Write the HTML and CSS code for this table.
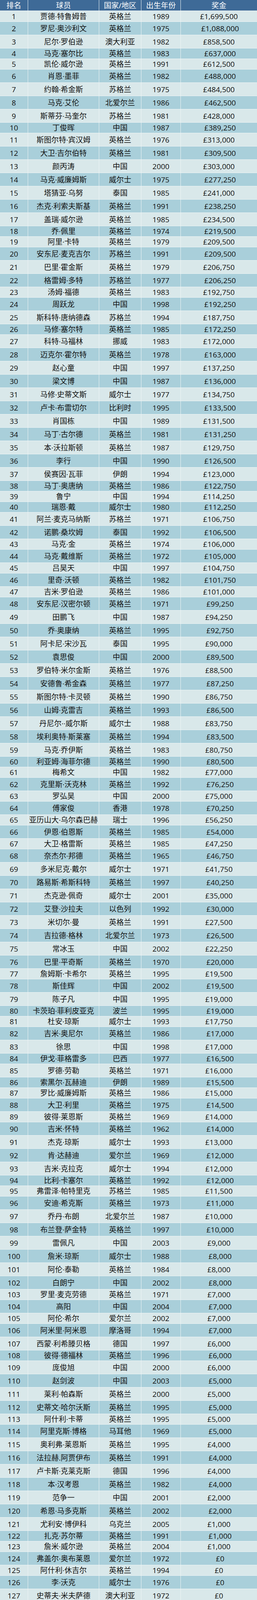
FILE: index.html
```html
<!DOCTYPE html>
<html lang="zh">
<head>
<meta charset="utf-8">
<title>奖金排名</title>
<link rel="stylesheet" href="styles.css">
</head>
<body>
<div class="sheet">
<div class="row head base"><span>排名</span><span>球员</span><span>国家/地区</span><span>出生年份</span><span>奖金</span></div>
<div class="row odd base"><span>1</span><span>贾德·特鲁姆普</span><span>英格兰</span><span>1989</span><span class="prize">£1,699,500</span></div>
<div class="row even tall"><span>2</span><span>罗尼·奥沙利文</span><span>英格兰</span><span>1975</span><span class="prize">£1,088,000</span></div>
<div class="row odd tall"><span>3</span><span>尼尔·罗伯逊</span><span>澳大利亚</span><span>1982</span><span class="prize">£858,500</span></div>
<div class="row even short"><span>4</span><span>马克·塞尔比</span><span>英格兰</span><span>1983</span><span class="prize">£637,000</span></div>
<div class="row odd short"><span>5</span><span>凯伦·威尔逊</span><span>英格兰</span><span>1991</span><span class="prize">£612,500</span></div>
<div class="row even tall"><span>6</span><span>肖恩·墨菲</span><span>英格兰</span><span>1982</span><span class="prize">£488,000</span></div>
<div class="row odd tall"><span>7</span><span>约翰·希金斯</span><span>苏格兰</span><span>1975</span><span class="prize">£484,500</span></div>
<div class="row even tall"><span>8</span><span>马克·艾伦</span><span>北爱尔兰</span><span>1986</span><span class="prize">£462,500</span></div>
<div class="row odd tall"><span>9</span><span>斯蒂芬·马奎尔</span><span>苏格兰</span><span>1981</span><span class="prize">£428,000</span></div>
<div class="row even short"><span>10</span><span>丁俊晖</span><span>中国</span><span>1987</span><span class="prize">£389,250</span></div>
<div class="row odd tall"><span>11</span><span>斯图尔特·宾汉姆</span><span>英格兰</span><span>1976</span><span class="prize">£313,000</span></div>
<div class="row even tall"><span>12</span><span>大卫·吉尔伯特</span><span>英格兰</span><span>1981</span><span class="prize">£309,500</span></div>
<div class="row odd tall"><span>13</span><span>颜丙涛</span><span>中国</span><span>2000</span><span class="prize">£303,000</span></div>
<div class="row even tall"><span>14</span><span>马克·威廉姆斯</span><span>威尔士</span><span>1975</span><span class="prize">£277,250</span></div>
<div class="row odd tall"><span>15</span><span>塔猜亚·乌努</span><span>泰国</span><span>1985</span><span class="prize">£241,000</span></div>
<div class="row even tall"><span>16</span><span>杰克·利索夫斯基</span><span>英格兰</span><span>1991</span><span class="prize">£238,250</span></div>
<div class="row odd tall"><span>17</span><span>盖瑞·威尔逊</span><span>英格兰</span><span>1985</span><span class="prize">£234,500</span></div>
<div class="row even short"><span>18</span><span>乔·佩里</span><span>英格兰</span><span>1974</span><span class="prize">£219,500</span></div>
<div class="row odd short"><span>19</span><span>阿里·卡特</span><span>英格兰</span><span>1979</span><span class="prize">£209,500</span></div>
<div class="row even tall"><span>20</span><span>安东尼·麦克吉尔</span><span>苏格兰</span><span>1991</span><span class="prize">£209,500</span></div>
<div class="row odd tall"><span>21</span><span>巴里·霍金斯</span><span>英格兰</span><span>1979</span><span class="prize">£206,750</span></div>
<div class="row even tall"><span>22</span><span>格雷姆·多特</span><span>苏格兰</span><span>1977</span><span class="prize">£206,250</span></div>
<div class="row odd short"><span>23</span><span>汤姆·福德</span><span>英格兰</span><span>1983</span><span class="prize">£192,750</span></div>
<div class="row even tall"><span>24</span><span>周跃龙</span><span>中国</span><span>1998</span><span class="prize">£192,250</span></div>
<div class="row odd tall"><span>25</span><span>斯科特·唐纳德森</span><span>苏格兰</span><span>1994</span><span class="prize">£187,750</span></div>
<div class="row even short"><span>26</span><span>马修·塞尔特</span><span>英格兰</span><span>1985</span><span class="prize">£172,250</span></div>
<div class="row odd tall"><span>27</span><span>科特·马福林</span><span>挪威</span><span>1983</span><span class="prize">£172,000</span></div>
<div class="row even tall"><span>28</span><span>迈克尔·霍尔特</span><span>英格兰</span><span>1978</span><span class="prize">£163,000</span></div>
<div class="row odd tall"><span>29</span><span>赵心童</span><span>中国</span><span>1997</span><span class="prize">£137,250</span></div>
<div class="row even tall"><span>30</span><span>梁文博</span><span>中国</span><span>1987</span><span class="prize">£136,000</span></div>
<div class="row odd tall"><span>31</span><span>马修·史蒂文斯</span><span>威尔士</span><span>1977</span><span class="prize">£134,750</span></div>
<div class="row even tall"><span>32</span><span>卢卡·布雷切尔</span><span>比利时</span><span>1995</span><span class="prize">£133,500</span></div>
<div class="row odd tall"><span>33</span><span>肖国栋</span><span>中国</span><span>1989</span><span class="prize">£131,500</span></div>
<div class="row even tall"><span>34</span><span>马丁·古尔德</span><span>英格兰</span><span>1981</span><span class="prize">£131,250</span></div>
<div class="row odd tall"><span>35</span><span>本·沃拉斯顿</span><span>英格兰</span><span>1987</span><span class="prize">£129,750</span></div>
<div class="row even tall"><span>36</span><span>李行</span><span>中国</span><span>1990</span><span class="prize">£126,500</span></div>
<div class="row odd tall"><span>37</span><span>侯赛因·瓦菲</span><span>伊朗</span><span>1994</span><span class="prize">£123,000</span></div>
<div class="row even short"><span>38</span><span>马丁·奥唐纳</span><span>英格兰</span><span>1986</span><span class="prize">£122,750</span></div>
<div class="row odd short"><span>39</span><span>鲁宁</span><span>中国</span><span>1994</span><span class="prize">£114,250</span></div>
<div class="row even short"><span>40</span><span>瑞恩·戴</span><span>威尔士</span><span>1980</span><span class="prize">£112,250</span></div>
<div class="row odd tall"><span>41</span><span>阿兰·麦克马纳斯</span><span>苏格兰</span><span>1971</span><span class="prize">£106,750</span></div>
<div class="row even tall"><span>42</span><span>诺鹏·桑坎姆</span><span>泰国</span><span>1992</span><span class="prize">£106,500</span></div>
<div class="row odd short"><span>43</span><span>马克·金</span><span>英格兰</span><span>1974</span><span class="prize">£106,000</span></div>
<div class="row even tall"><span>44</span><span>马克·戴维斯</span><span>英格兰</span><span>1972</span><span class="prize">£105,000</span></div>
<div class="row odd short"><span>45</span><span>吕昊天</span><span>中国</span><span>1997</span><span class="prize">£104,750</span></div>
<div class="row even tall"><span>46</span><span>里奇·沃顿</span><span>英格兰</span><span>1982</span><span class="prize">£101,750</span></div>
<div class="row odd short"><span>47</span><span>吉米·罗伯逊</span><span>英格兰</span><span>1986</span><span class="prize">£101,000</span></div>
<div class="row even tall"><span>48</span><span>安东尼·汉密尔顿</span><span>英格兰</span><span>1971</span><span class="prize">£99,250</span></div>
<div class="row odd tall"><span>49</span><span>田鹏飞</span><span>中国</span><span>1987</span><span class="prize">£94,250</span></div>
<div class="row even tall"><span>50</span><span>乔·奥康纳</span><span>英格兰</span><span>1995</span><span class="prize">£92,750</span></div>
<div class="row odd tall"><span>51</span><span>阿卡尼·宋沙瓦</span><span>泰国</span><span>1995</span><span class="prize">£90,000</span></div>
<div class="row even tall"><span>52</span><span>袁思俊</span><span>中国</span><span>2000</span><span class="prize">£89,500</span></div>
<div class="row odd tall"><span>53</span><span>罗伯特·米尔金斯</span><span>英格兰</span><span>1976</span><span class="prize">£88,500</span></div>
<div class="row even tall"><span>54</span><span>安德鲁·希金森</span><span>英格兰</span><span>1977</span><span class="prize">£87,250</span></div>
<div class="row odd tall"><span>55</span><span>斯图尔特·卡灵顿</span><span>英格兰</span><span>1990</span><span class="prize">£86,750</span></div>
<div class="row even tall"><span>56</span><span>山姆·克雷吉</span><span>英格兰</span><span>1993</span><span class="prize">£86,500</span></div>
<div class="row odd tall"><span>57</span><span>丹尼尔··威尔斯</span><span>威尔士</span><span>1988</span><span class="prize">£83,750</span></div>
<div class="row even tall"><span>58</span><span>埃利奥特·斯莱塞</span><span>英格兰</span><span>1994</span><span class="prize">£83,500</span></div>
<div class="row odd tall"><span>59</span><span>马克·乔伊斯</span><span>英格兰</span><span>1983</span><span class="prize">£80,750</span></div>
<div class="row even short"><span>60</span><span>利亚姆·海菲尔德</span><span>英格兰</span><span>1990</span><span class="prize">£80,500</span></div>
<div class="row odd short"><span>61</span><span>梅希文</span><span>中国</span><span>1982</span><span class="prize">£77,000</span></div>
<div class="row even tall"><span>62</span><span>克里斯·沃克林</span><span>英格兰</span><span>1992</span><span class="prize">£76,250</span></div>
<div class="row odd short"><span>63</span><span>罗弘昊</span><span>中国</span><span>2000</span><span class="prize">£75,000</span></div>
<div class="row even tall"><span>64</span><span>傅家俊</span><span>香港</span><span>1978</span><span class="prize">£70,250</span></div>
<div class="row odd short"><span>65</span><span>亚历山大·乌尔森巴赫</span><span>瑞士</span><span>1996</span><span class="prize">£56,250</span></div>
<div class="row even tall"><span>66</span><span>伊恩·伯恩斯</span><span>英格兰</span><span>1985</span><span class="prize">£54,000</span></div>
<div class="row odd short"><span>67</span><span>大卫·格雷斯</span><span>英格兰</span><span>1985</span><span class="prize">£47,250</span></div>
<div class="row even tall"><span>68</span><span>奈杰尔·邦德</span><span>英格兰</span><span>1965</span><span class="prize">£46,750</span></div>
<div class="row odd tall"><span>69</span><span>多米尼克·戴尔</span><span>威尔士</span><span>1971</span><span class="prize">£41,750</span></div>
<div class="row even tall"><span>70</span><span>路易斯·希斯科特</span><span>英格兰</span><span>1997</span><span class="prize">£40,250</span></div>
<div class="row odd tall"><span>71</span><span>杰克逊·佩奇</span><span>威尔士</span><span>2001</span><span class="prize">£35,000</span></div>
<div class="row even tall"><span>72</span><span>艾登·沙拉夫</span><span>以色列</span><span>1992</span><span class="prize">£30,000</span></div>
<div class="row odd tall"><span>73</span><span>米切尔·曼</span><span>英格兰</span><span>1991</span><span class="prize">£27,500</span></div>
<div class="row even tall"><span>74</span><span>吉拉德·格林</span><span>北爱尔兰</span><span>1973</span><span class="prize">£26,500</span></div>
<div class="row odd tall"><span>75</span><span>常冰玉</span><span>中国</span><span>2002</span><span class="prize">£22,250</span></div>
<div class="row even tall"><span>76</span><span>巴里·平奇斯</span><span>英格兰</span><span>1970</span><span class="prize">£20,000</span></div>
<div class="row odd short"><span>77</span><span>詹姆斯·卡希尔</span><span>英格兰</span><span>1995</span><span class="prize">£19,500</span></div>
<div class="row even tall"><span>78</span><span>斯佳辉</span><span>中国</span><span>2002</span><span class="prize">£19,500</span></div>
<div class="row odd tall"><span>79</span><span>陈子凡</span><span>中国</span><span>1995</span><span class="prize">£19,000</span></div>
<div class="row even short"><span>80</span><span>卡茨珀·菲利皮亚克</span><span>波兰</span><span>1995</span><span class="prize">£19,000</span></div>
<div class="row odd short"><span>81</span><span>杜安·琼斯</span><span>威尔士</span><span>1993</span><span class="prize">£17,750</span></div>
<div class="row even tall"><span>82</span><span>吉米·奥尼尔</span><span>英格兰</span><span>1986</span><span class="prize">£17,000</span></div>
<div class="row odd tall"><span>83</span><span>徐思</span><span>中国</span><span>1998</span><span class="prize">£17,000</span></div>
<div class="row even short"><span>84</span><span>伊戈·菲格雷多</span><span>巴西</span><span>1977</span><span class="prize">£16,500</span></div>
<div class="row odd tall"><span>85</span><span>罗德·劳勒</span><span>英格兰</span><span>1971</span><span class="prize">£16,000</span></div>
<div class="row even short"><span>86</span><span>索黑尔·瓦赫迪</span><span>伊朗</span><span>1989</span><span class="prize">£15,500</span></div>
<div class="row odd short"><span>87</span><span>罗比·威廉姆斯</span><span>英格兰</span><span>1986</span><span class="prize">£15,000</span></div>
<div class="row even tall"><span>88</span><span>大卫·利里</span><span>英格兰</span><span>1975</span><span class="prize">£14,500</span></div>
<div class="row odd short"><span>89</span><span>彼得·莱恩斯</span><span>英格兰</span><span>1969</span><span class="prize">£14,000</span></div>
<div class="row even tall"><span>90</span><span>吉米·怀特</span><span>英格兰</span><span>1962</span><span class="prize">£14,000</span></div>
<div class="row odd tall"><span>91</span><span>杰克·琼斯</span><span>威尔士</span><span>1993</span><span class="prize">£13,000</span></div>
<div class="row even tall"><span>92</span><span>肯·达赫迪</span><span>爱尔兰</span><span>1969</span><span class="prize">£12,000</span></div>
<div class="row odd tall"><span>93</span><span>吉米·克拉克</span><span>威尔士</span><span>1994</span><span class="prize">£12,000</span></div>
<div class="row even short"><span>94</span><span>比利·卡塞尔</span><span>英格兰</span><span>1992</span><span class="prize">£12,000</span></div>
<div class="row odd short"><span>95</span><span>弗雷泽·帕特里克</span><span>苏格兰</span><span>1985</span><span class="prize">£11,500</span></div>
<div class="row even tall"><span>96</span><span>安迪·希克斯</span><span>英格兰</span><span>1973</span><span class="prize">£11,000</span></div>
<div class="row odd tall"><span>97</span><span>乔丹·布朗</span><span>北爱尔兰</span><span>1987</span><span class="prize">£10,000</span></div>
<div class="row even tall"><span>98</span><span>布兰登·萨金特</span><span>英格兰</span><span>1997</span><span class="prize">£10,000</span></div>
<div class="row odd tall"><span>99</span><span>雷佩凡</span><span>中国</span><span>2003</span><span class="prize">£9,000</span></div>
<div class="row even tall"><span>100</span><span>詹米·琼斯</span><span>威尔士</span><span>1988</span><span class="prize">£8,000</span></div>
<div class="row odd tall"><span>101</span><span>阿伦·泰勒</span><span>英格兰</span><span>1984</span><span class="prize">£8,000</span></div>
<div class="row even tall"><span>102</span><span>白朗宁</span><span>中国</span><span>2002</span><span class="prize">£8,000</span></div>
<div class="row odd short"><span>103</span><span>罗里·麦克劳德</span><span>英格兰</span><span>1971</span><span class="prize">£7,000</span></div>
<div class="row even tall"><span>104</span><span>高阳</span><span>中国</span><span>2004</span><span class="prize">£7,000</span></div>
<div class="row odd short"><span>105</span><span>阿伦·希尔</span><span>爱尔兰</span><span>2002</span><span class="prize">£7,000</span></div>
<div class="row even tall"><span>106</span><span>阿米里·阿米恩</span><span>摩洛哥</span><span>1994</span><span class="prize">£7,000</span></div>
<div class="row odd tall"><span>107</span><span>西蒙·利希滕贝格</span><span>德国</span><span>1997</span><span class="prize">£6,000</span></div>
<div class="row even short"><span>108</span><span>彼得·德福林</span><span>英格兰</span><span>1996</span><span class="prize">£6,000</span></div>
<div class="row odd tall"><span>109</span><span>庞俊旭</span><span>中国</span><span>2000</span><span class="prize">£6,000</span></div>
<div class="row even tall"><span>110</span><span>赵剑波</span><span>中国</span><span>2003</span><span class="prize">£5,000</span></div>
<div class="row odd tall"><span>111</span><span>莱利·帕森斯</span><span>英格兰</span><span>2000</span><span class="prize">£5,000</span></div>
<div class="row even tall"><span>112</span><span>史蒂文·哈尔沃斯</span><span>英格兰</span><span>1995</span><span class="prize">£5,000</span></div>
<div class="row odd short"><span>113</span><span>阿什利·卡蒂</span><span>英格兰</span><span>1995</span><span class="prize">£5,000</span></div>
<div class="row even tall"><span>114</span><span>阿里克斯·博格</span><span>马耳他</span><span>1969</span><span class="prize">£5,000</span></div>
<div class="row odd tall"><span>115</span><span>奥利弗·莱恩斯</span><span>英格兰</span><span>1995</span><span class="prize">£4,000</span></div>
<div class="row even tall"><span>116</span><span>法拉赫.阿贾伊布</span><span>英格兰</span><span>1991</span><span class="prize">£4,000</span></div>
<div class="row odd tall"><span>117</span><span>卢卡斯·克莱克斯</span><span>德国</span><span>1996</span><span class="prize">£4,000</span></div>
<div class="row even tall"><span>118</span><span>本·汉考恩</span><span>英格兰</span><span>1982</span><span class="prize">£4,000</span></div>
<div class="row odd tall"><span>119</span><span>范争一</span><span>中国</span><span>2001</span><span class="prize">£2,000</span></div>
<div class="row even tall"><span>120</span><span>希恩·马多克斯</span><span>英格兰</span><span>2002</span><span class="prize">£2,000</span></div>
<div class="row odd tall"><span>121</span><span>尤利安·博伊科</span><span>乌克兰</span><span>2005</span><span class="prize">£1,000</span></div>
<div class="row even short"><span>122</span><span>扎克·苏尔蒂</span><span>英格兰</span><span>1991</span><span class="prize">£1,000</span></div>
<div class="row odd short"><span>123</span><span>詹米·威尔逊</span><span>英格兰</span><span>2004</span><span class="prize">£1,000</span></div>
<div class="row even tall"><span>124</span><span>弗盖尔·奥布莱恩</span><span>爱尔兰</span><span>1972</span><span class="prize">£0</span></div>
<div class="row odd short"><span>125</span><span>阿什利·休吉尔</span><span>英格兰</span><span>1994</span><span class="prize">£0</span></div>
<div class="row even tall"><span>126</span><span>李·沃克</span><span>威尔士</span><span>1976</span><span class="prize">£0</span></div>
<div class="row odd tall"><span>127</span><span>史蒂夫·米夫萨德</span><span>澳大利亚</span><span>1972</span><span class="prize">£0</span></div>
<div class="row even tall last"><span>128</span><span>斯蒂芬·亨德利</span><span>苏格兰</span><span>1969</span><span class="prize">£0</span></div>
</div>
</body>
</html>
```

FILE: styles.css
```css
html, body {
  margin: 0;
  padding: 0;
  background: #ffffff;
}

.sheet {
  width: 658px;
  height: 4137px;
  display: flex;
  flex-direction: column;
  font-family: "Open Sans", "Noto Sans CJK SC", sans-serif;
  font-size: 19px;
  line-height: 20px;
  color: #111111;
}

.row {
  flex: none;
  display: grid;
  grid-template-columns: 72px 182px 108px 101px 1fr;
  grid-template-rows: 100%;
  box-sizing: border-box;
  overflow: hidden;
  border-bottom: 1px solid #eef4f5;
}

.row > span {
  display: flex;
  align-items: center;
  justify-content: center;
  white-space: nowrap;
  min-height: 0;
  box-sizing: border-box;
  border-right: 1px solid #eef4f5;
}

.row > span:last-child {
  border-right: none;
}

.base { height: 28px; }
.tall { height: 34px; }
.short { height: 27px; }

.head {
  background: #3e6a97;
  color: #ffffff;
}

.odd { background: #d9e8ea; }
.even { background: #a9cfda; }

.row.last {
  flex: 1 1 auto;
  height: auto;
  min-height: 20px;
}

.even .prize { padding-left: 6px; }
```
